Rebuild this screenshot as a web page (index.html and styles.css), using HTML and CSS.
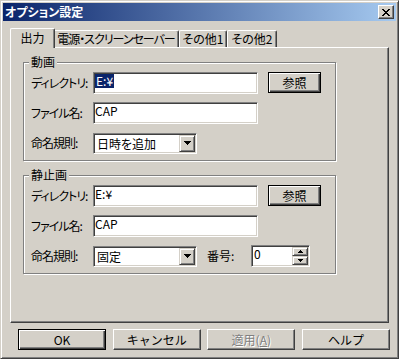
FILE: index.html
```html
<!DOCTYPE html>
<html lang="ja">
<head>
    <meta charset="UTF-8">
    <title>オプション設定</title>
    <link rel="stylesheet" href="styles.css">
</head>
<body>
    <div class="window">
        <div class="titlebar">
            <span class="title">オプション設定</span>
            <button class="close-btn">
                <svg width="8" height="7" viewBox="0 0 8 7" shape-rendering="crispEdges">
                    <path d="M0 0h2v1H0z M6 0h2v1H6z M1 1h2v1H1z M5 1h2v1H5z M2 2h4v1H2z M3 3h2v1H3z M2 4h4v1H2z M1 5h2v1H1z M5 5h2v1H5z M0 6h2v1H0z M6 6h2v1H6z" fill="#000"/>
                </svg>
            </button>
        </div>

        <div class="client">
            <div class="tabs">
                <div class="tab active">出力</div>
                <div class="tab tab-power">電源・スクリーンセーバー</div>
                <div class="tab tab-other1">その他1</div>
                <div class="tab tab-other2">その他2</div>
            </div>

            <div class="tab-page">
                <div class="group">
                    <span class="group-title">動画</span>
                    <div class="row">
                        <label class="field-label">ディレクトリ:</label>
                        <div class="edit"><span class="selected">E:¥</span></div>
                        <button class="btn default browse-btn">参照</button>
                    </div>
                    <div class="row">
                        <label class="field-label">ファイル名:</label>
                        <div class="edit">CAP</div>
                    </div>
                    <div class="row">
                        <label class="field-label">命名規則:</label>
                        <div class="combo">
                            <span class="combo-text">日時を追加</span>
                            <span class="combo-arrow">
                                <svg width="7" height="4" viewBox="0 0 7 4" shape-rendering="crispEdges"><path d="M0 0h7v1H0z M1 1h5v1H1z M2 2h3v1H2z M3 3h1v1H3z" fill="#000"/></svg>
                            </span>
                        </div>
                    </div>
                </div>

                <div class="group">
                    <span class="group-title">静止画</span>
                    <div class="row">
                        <label class="field-label">ディレクトリ:</label>
                        <div class="edit">E:¥</div>
                        <button class="btn default browse-btn">参照</button>
                    </div>
                    <div class="row">
                        <label class="field-label">ファイル名:</label>
                        <div class="edit">CAP</div>
                    </div>
                    <div class="row">
                        <label class="field-label">命名規則:</label>
                        <div class="combo">
                            <span class="combo-text">固定</span>
                            <span class="combo-arrow">
                                <svg width="7" height="4" viewBox="0 0 7 4" shape-rendering="crispEdges"><path d="M0 0h7v1H0z M1 1h5v1H1z M2 2h3v1H2z M3 3h1v1H3z" fill="#000"/></svg>
                            </span>
                        </div>
                        <label class="number-label">番号:</label>
                        <div class="spin">
                            <span class="spin-text">0</span>
                            <span class="spin-buttons">
                                <span class="spin-btn">
                                    <svg width="5" height="3" viewBox="0 0 5 3" shape-rendering="crispEdges"><path d="M2 0h1v1H2z M1 1h3v1H1z M0 2h5v1H0z" fill="#000"/></svg>
                                </span>
                                <span class="spin-btn">
                                    <svg width="5" height="3" viewBox="0 0 5 3" shape-rendering="crispEdges"><path d="M0 0h5v1H0z M1 1h3v1H1z M2 2h1v1H2z" fill="#000"/></svg>
                                </span>
                            </span>
                        </div>
                    </div>
                </div>
            </div>

            <div class="buttons">
                <button class="btn default">OK</button>
                <button class="btn">キャンセル</button>
                <button class="btn disabled">適用(<u>A</u>)</button>
                <button class="btn">ヘルプ</button>
            </div>
        </div>
    </div>
</body>
</html>
```

FILE: styles.css
```css
* {
    box-sizing: border-box;
}
body {
    margin: 0;
    background-color: #d4d0c8;
    font-family: "Noto Sans CJK JP", sans-serif;
    font-size: 12px;
    font-feature-settings: "palt";
    color: #000;
}
.window {
    width: 399px;
    height: 359px;
    padding: 2px;
    border: 1px solid;
    border-color: #d4d0c8 #404040 #404040 #d4d0c8;
    box-shadow: inset 1px 1px #fff, inset -1px -1px #808080;
    display: flex;
    flex-direction: column;
}
.titlebar {
    height: 18px;
    padding: 0 2px;
    display: flex;
    align-items: center;
    justify-content: space-between;
    background: linear-gradient(to right, #0a246a, #a6caf0);
}
.title {
    color: #fff;
    font-weight: bold;
    line-height: 18px;
}
.close-btn {
    width: 16px;
    height: 14px;
    padding: 0;
    display: flex;
    align-items: center;
    justify-content: center;
    background-color: #d4d0c8;
    border: 1px solid;
    border-color: #fff #404040 #404040 #fff;
    box-shadow: inset -1px -1px #808080;
}
.client {
    flex: 1;
    padding: 7px 7px 0 7px;
    display: flex;
    flex-direction: column;
}

/* tabs */
.tabs {
    height: 19px;
    padding-left: 2px;
    display: flex;
    align-items: flex-end;
}
.tab {
    flex-shrink: 0;
    height: 17px;
    line-height: 15px;
    text-align: center;
    white-space: nowrap;
    border: 1px solid;
    border-bottom: none;
    border-color: #fff #404040 #404040 #fff;
    border-radius: 2px 2px 0 0;
    box-shadow: inset -1px 0 #808080;
}
.tab.active {
    position: relative;
    z-index: 1;
    width: 45px;
    height: 20px;
    line-height: 17px;
    margin: 0 -2px -1px -2px;
    background-color: #d4d0c8;
}
.tab-power {
    width: 126px;
    letter-spacing: -1px;
}
.tab-other1 {
    width: 48px;
}
.tab-other2 {
    width: 50px;
}
.tab-page {
    height: 276px;
    padding: 14px 0 0 12px;
    border: 1px solid;
    border-color: #fff #404040 #404040 #fff;
    box-shadow: inset -1px -1px #808080;
}

/* group boxes */
.group {
    width: 313px;
    height: 99px;
    margin-bottom: 14px;
    padding-left: 7px;
    border: 1px solid #808080;
    box-shadow: 1px 1px #fff, inset 1px 1px #fff;
}
.group-title {
    display: block;
    width: fit-content;
    margin: -8px 0 0 -2px;
    padding: 0 2px;
    line-height: 14px;
    background-color: #d4d0c8;
}
.row {
    height: 22px;
    margin-top: 8px;
    display: flex;
    align-items: center;
}
.group-title + .row {
    margin-top: 3px;
}
.field-label {
    flex-shrink: 0;
    width: 62px;
    line-height: 14px;
    letter-spacing: -1px;
    white-space: nowrap;
}
.edit {
    flex-shrink: 0;
    width: 165px;
    height: 22px;
    padding: 1px 0 0 1px;
    line-height: 14px;
    background-color: #fff;
    border: 1px solid;
    border-color: #808080 #fff #fff #808080;
    box-shadow: inset 1px 1px #404040, inset -1px -1px #d4d0c8;
}
.selected {
    display: inline-block;
    padding: 0 1px;
    color: #fff;
    background-color: #0a246a;
}

/* buttons */
.btn {
    flex-shrink: 0;
    width: 88px;
    height: 21px;
    padding: 0;
    font-family: inherit;
    font-size: 12px;
    line-height: 17px;
    color: #000;
    background-color: #d4d0c8;
    border: 1px solid;
    border-color: #fff #404040 #404040 #fff;
    box-shadow: inset -1px -1px #808080;
}
.btn.default {
    border-color: #000;
    box-shadow: inset 1px 1px #fff, inset -1px -1px #404040, inset -2px -2px #808080;
}
.btn.disabled {
    color: #808080;
    text-shadow: 1px 1px #fff;
}
.browse-btn {
    width: 53px;
    margin-left: 10px;
    align-self: flex-start;
}

/* combo and spin */
.combo {
    flex-shrink: 0;
    width: 104px;
    height: 21px;
    display: flex;
    padding: 1px;
    background-color: #fff;
    border: 1px solid;
    border-color: #808080 #fff #fff #808080;
    box-shadow: inset 1px 1px #404040, inset -1px -1px #d4d0c8;
}
.combo-text {
    flex: 1;
    padding-left: 2px;
    line-height: 17px;
}
.combo-arrow {
    width: 16px;
    height: 17px;
    display: flex;
    align-items: center;
    justify-content: center;
    background-color: #d4d0c8;
    border: 1px solid;
    border-color: #d4d0c8 #404040 #404040 #d4d0c8;
    box-shadow: inset 1px 1px #fff, inset -1px -1px #808080;
}
.number-label {
    flex-shrink: 0;
    width: 44px;
    margin-left: 10px;
    line-height: 14px;
}
.spin {
    flex-shrink: 0;
    width: 59px;
    height: 22px;
    display: flex;
    padding: 1px;
    background-color: #fff;
    border: 1px solid;
    border-color: #808080 #fff #fff #808080;
    box-shadow: inset 1px 1px #404040, inset -1px -1px #d4d0c8;
}
.spin-text {
    flex: 1;
    padding-left: 1px;
    line-height: 14px;
}
.spin-buttons {
    width: 16px;
    display: flex;
    flex-direction: column;
}
.spin-btn {
    flex: 1;
    display: flex;
    align-items: center;
    justify-content: center;
    background-color: #d4d0c8;
    border: 1px solid;
    border-color: #d4d0c8 #404040 #404040 #d4d0c8;
    box-shadow: inset 1px 1px #fff, inset -1px -1px #808080;
}

.buttons {
    margin: 6px -1px 0 8px;
    display: flex;
    justify-content: space-between;
}
```
